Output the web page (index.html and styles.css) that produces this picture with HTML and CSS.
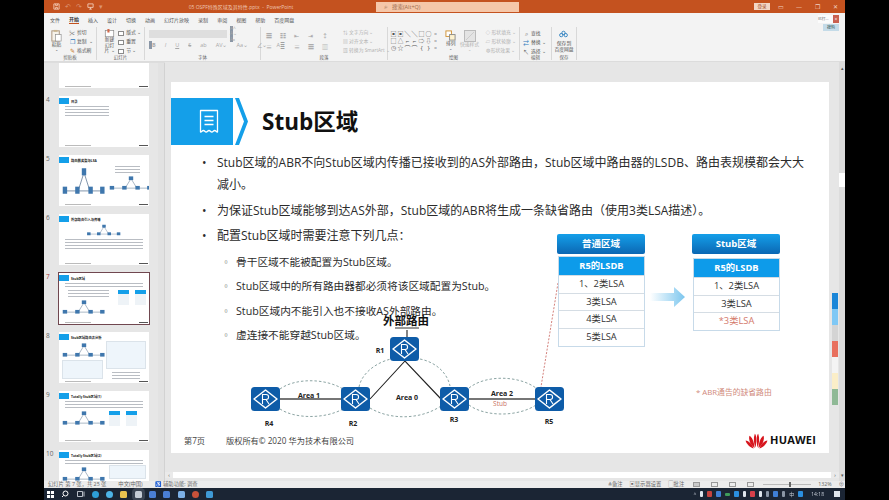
FILE: index.html
```html
<!DOCTYPE html>
<html lang="zh">
<head>
<meta charset="utf-8">
<title>PowerPoint</title>
<link rel="stylesheet" href="styles.css">
</head>
<body>
<svg class="defs" width="0" height="0">
  <symbol id="router" viewBox="0 0 29 24">
    <rect width="29" height="24" rx="3.5" fill="#0e5ca8"/>
    <path d="M14.5 3 26 12 14.5 21 3 12Z" fill="#0e5ca8" stroke="#fff" stroke-width="1.5" stroke-linejoin="round"/>
    <path d="M11.500 17V7.500h3.600a2.500 2.500 0 0 1 0 5h-3.600M15 12.500l3 4.500" fill="none" stroke="#fff" stroke-width="1.100"/>
  </symbol>
  <symbol id="mininet" viewBox="0 0 60 24">
    <path d="M5 19H55M22 19 30 6 38 19" stroke="#5a7390" stroke-width=".7" fill="none"/>
    <rect x="1" y="16" width="6" height="5" fill="#3f77ad"/><rect x="18" y="16" width="6" height="5" fill="#3f77ad"/>
    <rect x="27" y="3" width="6" height="5" fill="#3f77ad"/><rect x="36" y="16" width="6" height="5" fill="#3f77ad"/>
    <rect x="52" y="16" width="6" height="5" fill="#3f77ad"/>
  </symbol>
</svg>
<div class="app">
  <header class="titlebar">
    <div class="qat">
      <svg class="qi" viewBox="0 0 8 8"><path d="M1 1h6v6H1zM3 1v2h2V1M3 7V5h2v2" fill="none" stroke="#f4cdb8"/></svg>
      <span class="qt">↶</span><span class="qt">↷</span>
      <svg class="qi" viewBox="0 0 8 8"><path d="M1 1h6v4H1zM4 5v2M2.500 7h3" fill="none" stroke="#f4cdb8"/></svg>
      <span class="qt">▾</span>
    </div>
    <div class="doc-title">05 OSPF特殊区域及其特性.pptx  -  PowerPoint</div>
    <div class="search"><span class="search-ico">⌕</span>搜索(Alt+Q)</div>
    <div class="win-ctl">
      <span class="login">登录</span>
      <span class="wc">▭</span><span class="wc">—</span><span class="wc">❐</span><span class="wc">✕</span>
    </div>
  </header>

  <nav class="tabs">
    <span>文件</span><span class="on">开始</span><span>插入</span><span>设计</span><span>切换</span><span>动画</span><span>幻灯片放映</span><span>录制</span><span>审阅</span><span>视图</span><span>帮助</span><span>百度网盘</span>
  </nav>

  <section class="ribbon">
    <div class="group g-clip">
      <div class="g-body">
        <div class="big">
          <svg class="big-ico" viewBox="0 0 12 14"><rect x="1" y="2" width="8" height="11" fill="#f6f2ea" stroke="#a9927a"/><rect x="3" y="1" width="4" height="2" fill="#c9b48f"/><rect x="5" y="6" width="6" height="7" fill="#fff" stroke="#8b8b8b" stroke-width=".7"/></svg>
          <span>粘贴</span><i>⌄</i>
        </div>
        <div class="stack">
          <span><b class="mk">✂</b>剪切</span>
          <span><b class="mk blue">❐</b>复制 <i>⌄</i></span>
          <span><b class="mk orange">✎</b>格式刷</span>
        </div>
      </div>
      <div class="g-label">剪贴板</div>
    </div>
    <div class="group g-slide">
      <div class="g-body">
        <div class="big">
          <svg class="big-ico" viewBox="0 0 14 12"><rect x="1" y="2" width="12" height="9" fill="#fff" stroke="#8a8a8a"/><rect x="4" y="0" width="3" height="5" fill="#d2694a"/></svg>
          <span>新建<br>幻灯片 ⌄</span>
        </div>
        <div class="stack">
          <span><b class="mk gbox"></b>版式 ⌄</span>
          <span><b class="mk gbox"></b>重置</span>
          <span><b class="mk gbox"></b>节 ⌄</span>
        </div>
      </div>
      <div class="g-label">幻灯片</div>
    </div>
    <div class="group g-font">
      <div class="g-body col">
        <div class="font-row"><span class="font-box"></span><span class="dim">A^ A⌄ Aₐ</span></div>
        <div class="font-row dim spread"><b>B</b><em>I</em><u>U</u><s>S</s><span>ab</span><span>AV⌄</span><span>Aa⌄</span><span>∠⌄</span><span>A⌄</span></div>
      </div>
      <div class="g-label">字体</div>
    </div>
    <div class="group g-para">
      <div class="g-body">
        <div class="para-grid">
          <span>☰</span><span>☷</span><span>⇤</span><span>⇥</span><span>↕</span>
          <span>≡</span><span>≣</span><span>≡</span><span>☰</span><span>▥</span>
        </div>
        <div class="stack dimtext">
          <span>⇅ 文字方向 ⌄</span>
          <span>▤ 对齐文本 ⌄</span>
          <span>▧ 转换为 SmartArt ⌄</span>
        </div>
      </div>
      <div class="g-label">段落</div>
    </div>
    <div class="group g-draw">
      <div class="g-body">
        <div class="shapes">
          <span>▣</span><span>▣</span><span>╲</span><span>╲</span><span>□</span><span>○</span><span>▫</span>
          <span>□</span><span>△</span><span>⌐</span><span>⌐</span><span>⇨</span><span>⇩</span><span>▫</span>
          <span>◷</span><span>☆</span><span>⌒</span><span>⌒</span><span>{</span><span>}</span><span>▫</span>
        </div>
        <div class="big small-big">
          <svg class="arr-ico" viewBox="0 0 12 12"><rect x="1" y="1" width="6" height="6" fill="#fff" stroke="#d0902e"/><rect x="5" y="5" width="6" height="6" fill="#fdf2d0" stroke="#888"/></svg>
          <span>排列</span><i>⌄</i>
        </div>
        <div class="big small-big dimtext">
          <svg class="arr-ico wide" viewBox="0 0 12 12"><rect x=".5" y=".5" width="11" height="11" fill="#e4e4e4" stroke="#bbb"/><path d="M2 10 10 2" stroke="#ccc"/></svg>
          <span>快速样式</span><i>⌄</i>
        </div>
        <div class="stack dimtext">
          <span>◇ 形状填充 ⌄</span>
          <span>▱ 形状轮廓 ⌄</span>
          <span>◍ 形状效果 ⌄</span>
        </div>
      </div>
      <div class="g-label">绘图</div>
    </div>
    <div class="group g-edit">
      <div class="g-body">
        <div class="stack">
          <span><b class="mk">⌕</b>查找</span>
          <span><b class="mk blue">⇄</b>替换 ⌄</span>
          <span><b class="mk">↖</b>选择 ⌄</span>
        </div>
      </div>
      <div class="g-label">编辑</div>
    </div>
    <div class="group g-save">
      <div class="g-body">
        <div class="big">
          <svg class="cloud" viewBox="0 0 12 9"><circle cx="6" cy="3" r="2.200" fill="none" stroke="#2a7fc0" stroke-width="1.200"/><circle cx="3" cy="6" r="2.200" fill="none" stroke="#2a7fc0" stroke-width="1.200"/><circle cx="9" cy="6" r="2.200" fill="none" stroke="#2a7fc0" stroke-width="1.200"/></svg>
          <span>保存到<br>百度网盘</span>
        </div>
      </div>
      <div class="g-label">保存</div>
    </div>
    <div class="share">
      <div class="share-row"><span class="share-txt">已打...</span><span class="share-x">×</span></div>
      <div class="tip">搜狗</div>
    </div>
  </section>

  <main class="workspace">
    <aside class="thumbs">
      <div class="thumb-list">
        <div class="t-row"><span class="num"></span><div class="thumb"><div class="t-foot"><span></span><b></b></div></div></div>

        <div class="t-row"><span class="num">4</span><div class="thumb">
          <div class="t-head"><i></i><span>目录</span></div>
          <div class="t-lines short"><u></u><u></u><u></u><u></u></div>
          <div class="t-foot"><span></span><b></b></div>
        </div></div>

        <div class="t-row"><span class="num">5</span><div class="thumb">
          <div class="t-head"><i></i><span>路由器类型与LSA</span></div>
          <div class="t-cols">
            <svg class="t-net tall" viewBox="0 0 60 24" preserveAspectRatio="none"><use href="#mininet"/></svg>
            <div class="t-side"><div class="t-lines"><u></u><u></u><u></u></div><svg class="t-net" viewBox="0 0 60 24"><use href="#mininet"/></svg></div>
          </div>
          <div class="t-foot"><span></span><b></b></div>
        </div></div>

        <div class="t-row"><span class="num">6</span><div class="thumb">
          <div class="t-head"><i></i><span>外部路由引入与传播</span></div>
          <svg class="t-net center" viewBox="0 0 60 24"><use href="#mininet"/></svg>
          <div class="t-lines"><u></u><u></u><u></u><u></u></div>
          <div class="t-foot"><span></span><b></b></div>
        </div></div>

        <div class="t-row current"><span class="num">7</span><div class="thumb">
          <div class="t-head"><i></i><span>Stub区域</span></div>
          <div class="t-lines"><u></u><u></u></div>
          <div class="t-cols">
            <div class="t-side"><div class="t-lines"><u></u><u></u><u></u></div><svg class="t-net" viewBox="0 0 60 24"><use href="#mininet"/></svg></div>
            <div class="t-tables"><i></i><i></i></div>
          </div>
          <div class="t-foot"><span></span><b></b></div>
        </div></div>

        <div class="t-row"><span class="num">8</span><div class="thumb">
          <div class="t-head"><i></i><span>Stub区域路由表分析</span></div>
          <div class="t-cols">
            <div class="t-side"><svg class="t-net" viewBox="0 0 60 24"><use href="#mininet"/></svg><div class="t-box"></div></div>
            <div class="t-side"><div class="t-box"></div><div class="t-lines"><u></u><u></u><u></u></div></div>
          </div>
          <div class="t-foot"><span></span><b></b></div>
        </div></div>

        <div class="t-row"><span class="num">9</span><div class="thumb">
          <div class="t-head"><i></i><span>Totally Stub区域(1)</span></div>
          <div class="t-lines"><u></u><u></u><u></u></div>
          <div class="t-cols">
            <svg class="t-net" viewBox="0 0 60 24"><use href="#mininet"/></svg>
            <div class="t-tables"><i></i><i></i></div>
          </div>
          <div class="t-foot"><span></span><b></b></div>
        </div></div>

        <div class="t-row"><span class="num">10</span><div class="thumb">
          <div class="t-head"><i></i><span>Totally Stub区域(2)</span></div>
          <div class="t-lines"><u></u><u></u></div>
          <div class="t-cols">
            <svg class="t-net" viewBox="0 0 60 24"><use href="#mininet"/></svg>
            <div class="t-box"></div>
          </div>
        </div></div>
      </div>
      <div class="t-scroll"><span></span></div>
    </aside>

    <div class="editor">
      <div class="editor-main">
        <div class="stage">
          <article class="slide">
            <div class="s-head">
              <div class="s-badge">
                <svg class="s-doc" viewBox="0 0 20 25"><path d="M1.500 1.500h17v21.500c-1.400 0-1.400-1.500-2.800-1.500s-1.500 1.500-2.900 1.500-1.400-1.500-2.800-1.500-1.400 1.500-2.800 1.500-1.400-1.500-2.800-1.500-1.500 1.500-2.900 1.500ZM5.500 7.500h9M5.500 11.500h9M5.500 15.500h9" fill="none" stroke="#fff" stroke-width="1.300" stroke-linejoin="round"/></svg>
              </div>
              <svg class="s-chev" viewBox="0 0 16 47"><path d="M2 0H6L15 23.500 6 47H2L11 23.500Z" fill="#149fe9"/></svg>
              <h1>Stub区域</h1>
            </div>
            <ul class="bullets">
              <li>Stub区域的ABR不向Stub区域内传播已接收到的AS外部路由，Stub区域中路由器的LSDB、路由表规模都会大大减小。</li>
              <li>为保证Stub区域能够到达AS外部，Stub区域的ABR将生成一条缺省路由（使用3类LSA描述）。</li>
              <li>配置Stub区域时需要注意下列几点：
                <ul class="sub">
                  <li>骨干区域不能被配置为Stub区域。</li>
                  <li>Stub区域中的所有路由器都必须将该区域配置为Stub。</li>
                  <li>Stub区域内不能引入也不接收AS外部路由。</li>
                  <li>虚连接不能穿越Stub区域。</li>
                </ul>
              </li>
            </ul>

            <svg class="s-diagram" viewBox="171 82 658 371">
              <defs>
                <linearGradient id="arrow" x1="0" x2="1"><stop offset="0" stop-color="#fff"/><stop offset="1" stop-color="#7cc6ee"/></linearGradient>
              </defs>
              <path d="M558 283 540 393" fill="none" stroke="#c8615a" stroke-width=".8" stroke-dasharray="2 1.500"/>
              <g fill="none" stroke="#7f9a98" stroke-width=".9" stroke-dasharray="2.500 2">
                <path d="M280 389C295 378 325 378 343 389M280 409C295 419 325 419 343 409"/>
                <path d="M359 387C362 372 378 362 391 359M420 359C435 362 447 372 450 386M370 408C390 420 420 420 441 406"/>
                <path d="M469 388C485 375 518 375 536 388M469 405C485 417 518 417 536 405"/>
              </g>
              <path d="M279 399H341M469 399H536" stroke="#4a4a4a" stroke-width="1.300"/>
              <path d="M370 399 405 361 441 399M407 330V338" stroke="#222" stroke-width="1.100" fill="none"/>
              <path d="M395 328H419" stroke="#333" stroke-width="1"/>
              <use href="#router" x="390" y="337" width="29" height="24"/>
              <use href="#router" x="251" y="387" width="29" height="24"/>
              <use href="#router" x="341" y="387" width="29" height="24"/>
              <use href="#router" x="440" y="387" width="29" height="24"/>
              <use href="#router" x="535" y="387" width="29" height="24"/>
              <text class="d-ext" x="406" y="325">外部路由</text>
              <g class="d-lbl">
                <text x="380" y="353">R1</text><text x="269" y="426">R4</text><text x="353" y="426">R2</text><text x="454" y="422">R3</text><text x="549" y="424">R5</text>
                <text x="309" y="398">Area 1</text><text x="407" y="400">Area 0</text><text x="502" y="396">Area 2</text>
              </g>
              <text class="d-stub" x="500" y="406">Stub</text>
              <path d="M650 293H674V287L685 297 674 307V301H650Z" fill="url(#arrow)"/>
            </svg>

            <div class="lsdb lsdb-a">
              <div class="l-title">普通区域</div>
              <div class="l-table">
                <div class="l-head">R5的LSDB</div>
                <div class="l-row">1、2类LSA</div><div class="l-row">3类LSA</div><div class="l-row">4类LSA</div><div class="l-row">5类LSA</div>
              </div>
            </div>
            <div class="lsdb lsdb-b">
              <div class="l-title">Stub区域</div>
              <div class="l-table">
                <div class="l-head">R5的LSDB</div>
                <div class="l-row">1、2类LSA</div><div class="l-row">3类LSA</div><div class="l-row red">*3类LSA</div>
              </div>
            </div>
            <div class="s-note">* ABR通告的缺省路由</div>

            <footer class="s-foot">
              <span class="s-page">第7页</span>
              <span class="s-copy">版权所有© 2020 华为技术有限公司</span>
              <span class="s-logo">
                <svg class="petals" viewBox="-12 -11 24 19">
                  <g fill="#d7151d">
                    <path d="M-1 6.500C-3 2-3.500-3-1.800-8-.2-7 .5-2-1 6.500Z"/>
                    <path d="M1 6.500C3 2 3.500-3 1.800-8 .2-7-.5-2 1 6.500Z"/>
                    <path d="M-2 7C-7 3-8.500-2-7.500-6-5-5-2.500 0-2 7Z"/>
                    <path d="M2 7C7 3 8.500-2 7.500-6 5-5 2.500 0 2 7Z"/>
                    <path d="M-3 7.500C-7 6-10.500 3-11.500-1-8-.5-4.500 3-3 7.500Z"/>
                    <path d="M3 7.500C7 6 10.500 3 11.500-1 8-.5 4.500 3 3 7.500Z"/>
                  </g>
                </svg>
                <b>HUAWEI</b>
              </span>
            </footer>
          </article>
          <div class="strip"><i class="c1"></i><i class="c2"></i><i class="c3"></i><i class="c4"></i><i class="c5"></i><i class="c6"></i><i class="c7"></i></div>
        </div>
        <div class="hscroll"><span class="h-btn">‹</span><span class="h-thumb"></span><span class="h-btn end">›</span></div>
      </div>
      <div class="vscroll"><span class="v-btn">▴</span><span class="v-thumb"></span><span class="v-btn low">▾</span></div>
    </div>
  </main>

  <footer class="status">
    <div class="st-left"><span>幻灯片 第 7 张，共 25 张</span><span>中文(中国)</span><span>♿ 辅助功能: 调查</span></div>
    <div class="st-right"><span>≜备注</span><span>▣显示器设置</span><span>▢批注</span><span class="vb on"></span><span class="vb"></span><span class="vb"></span><span class="vb"></span><span class="zoom"><i></i></span><span>132%</span><span>⊕</span></div>
  </footer>

  <div class="taskbar">
    <div class="tb-left">
      <svg class="winlogo" viewBox="0 0 8 8"><path d="M0 0h3.500v3.500H0zM4.500 0H8v3.500H4.500zM0 4.500h3.500V8H0zM4.500 4.500H8V8H4.500z" fill="#fff"/></svg>
      <svg class="tb-ico" viewBox="0 0 8 8"><circle cx="4.500" cy="3.500" r="2.500" fill="none" stroke="#fff"/><path d="M2.500 5.500 1 7" stroke="#fff"/></svg>
      <svg class="tb-ico" viewBox="0 0 8 8"><path d="M.5 1.500h5v5h-5zM7 1.500v5" fill="none" stroke="#dfe5ec" stroke-width=".8"/></svg>
      <i class="ti edge"></i><i class="ti qq"></i><i class="ti fold"></i><i class="ti act"></i><i class="ti word"></i><i class="ti word"></i><i class="ti pic"></i><i class="ti ppt"></i><i class="ti dl"></i>
    </div>
    <div class="tb-right">
      <span class="chev">^</span><i class="tr wt"></i><i class="tr rd"></i><i class="tr bl"></i><i class="tr gr"></i><i class="tr bl2"></i><i class="tr wt2"></i><i class="tr rd2"></i><i class="tr wt"></i><i class="tr dim"></i><i class="tr bl"></i><i class="tr dim"></i><span class="ime">中</span><i class="tr bl2"></i>
      <span class="clock">14:18</span><i class="notice"></i>
    </div>
  </div>
</div>
</body>
</html>
```
FILE: styles.css
```css
* { box-sizing: border-box; }
html, body { margin: 0; height: 100%; background: #000; overflow: hidden; }
body { font-family: "Open Sans", "Noto Sans CJK SC", sans-serif; }
.defs { position: absolute; }
i { font-style: normal; }

.app {
  width: 801px; height: 500px; margin-left: 44px;
  display: flex; flex-direction: column;
  background: #f3f3f3; color: #444;
  filter: blur(.45px);
}

/* title bar */
.titlebar { height: 13px; background: #c4521f; display: flex; align-items: center; position: relative; color: #f3d6c6; font-size: 5.5px; flex: none; }
.qat { display: flex; align-items: center; gap: 5px; padding-left: 9px; width: 97px; flex: none; }
.qi { width: 7px; height: 7px; }
.qt { font-size: 7px; line-height: 7px; color: #dd9472; }
.doc-title { width: 200px; flex: none; text-align: center; white-space: pre; font-size: 5px; color: #efc7b2; }
.search { margin-left: 35px; width: 143px; height: 10px; flex: none; background: #f5c7a9; color: #9a6a4b; padding-left: 8px; display: flex; align-items: center; gap: 4px; }
.search-ico { font-size: 7px; line-height: 7px; }
.win-ctl { margin-left: auto; display: flex; align-items: center; padding-right: 1px; color: #f2d3c2; font-size: 6px; }
.login { background: #f2d6c6; color: #a24a20; width: 16px; height: 7px; line-height: 7px; text-align: center; font-size: 4.500px; margin-right: 2px; }
.wc { width: 18px; text-align: center; }

/* tabs */
.tabs { height: 13px; flex: none; display: flex; align-items: center; padding-left: 6px; gap: 9px; font-size: 5px; color: #555; background: #f3f3f3; }
.tabs span { white-space: nowrap; }
.tabs .on { color: #333; font-weight: 700; border-bottom: 1px solid #c4521f; line-height: 7px; }

/* ribbon */
.ribbon { height: 36px; flex: none; display: flex; background: #f3f3f3; position: relative; border-bottom: 1px solid #dcdcdc; font-size: 4.800px; color: #555; line-height: 1.15; }
.group { display: flex; flex-direction: column; border-right: 1px solid #d8d8d8; margin: 1px 0 1px; flex: none; }
.g-body { flex: 1; display: flex; gap: 3px; padding: 1px 3px 0; min-height: 0; }
.g-body.col { flex-direction: column; gap: 3px; padding: 3px 4px 0; }
.g-label { height: 6px; line-height: 6px; text-align: center; font-size: 4.500px; color: #666; }
.g-clip { width: 53px; } .g-slide { width: 48px; } .g-font { width: 116px; } .g-para { width: 127px; }
.g-draw { width: 132px; } .g-edit { width: 32px; } .g-save { width: 25px; }
.big { display: flex; flex-direction: column; align-items: center; text-align: center; justify-content: flex-start; }
.big i { line-height: 3px; font-size: 4px; }
.big-ico { width: 13px; height: 13px; margin-top: 1px; }
.stack { display: flex; flex-direction: column; gap: 3px; padding-top: 2px; white-space: nowrap; }
.stack span { display: flex; align-items: center; gap: 2px; height: 6px; }
.mk { display: inline-block; width: 6px; text-align: center; font-size: 6px; font-weight: 400; color: #666; }
.mk.blue { color: #2d78bc; } .mk.orange { color: #c97a2a; }
.mk.gbox { height: 5px; border: 1px solid #8a8a8a; background: #fff; }
.g-clip .g-body { padding-left: 6px; gap: 6px; }
.g-slide .g-body { padding-left: 6px; gap: 2px; }
.font-row { display: flex; align-items: center; gap: 3px; height: 8px; }
.font-box { width: 78px; height: 8px; background: #dedede; }
.dim { color: #a8a8a8; }
.spread { justify-content: flex-start; gap: 9px; font-size: 5.500px; padding-left: 3px; }
.para-grid { display: grid; grid-template-columns: repeat(5, 14px); grid-auto-rows: 11px; align-items: center; padding: 3px 0 0 2px; color: #a0a0a0; font-size: 6px; }
.dimtext { color: #b0b0b0; }
.g-para .stack { margin-left: 4px; }
.shapes { display: grid; grid-template-columns: repeat(7, 7px); grid-auto-rows: 7px; font-size: 6px; line-height: 7px; color: #555; text-align: center; padding-top: 3px; }
.small-big { width: 14px; white-space: nowrap; }
.arr-ico { width: 11px; height: 11px; margin-top: 2px; }
.arr-ico.wide { width: 12px; height: 12px; }
.g-draw .g-body { gap: 5px; padding-left: 2px; }
.g-draw .stack { margin-left: 4px; }
.g-edit .stack { padding-top: 3px; }
.g-save .g-body { padding: 2px 0 0; justify-content: center; }
.cloud { width: 9px; height: 8px; margin: 1px 0 3px; }
.share { position: absolute; right: 6px; top: 2px; width: 21px; display: flex; flex-direction: column; align-items: flex-end; gap: 1px; margin-top: -13px; }
.share-row { display: flex; height: 8px; align-items: center; background: #fbfbfb; width: 21px; justify-content: space-between; font-size: 3.800px; }
.share-x { width: 6px; height: 8px; background: #c9604f; color: #fff; text-align: center; line-height: 8px; font-size: 5px; }
.tip { width: 16px; height: 7px; background: #c4dbe8; text-align: center; font-size: 4px; line-height: 7px; color: #355; }

/* workspace */
.workspace { flex: 1; min-height: 0; display: flex; background: #e6e6e6; }
.thumbs { width: 121px; flex: none; display: flex; overflow: hidden; border-top: 1px solid #ddd; }
.thumb-list { width: 114px; flex: none; display: flex; flex-direction: column; gap: 8px; margin-top: -26px; }
.t-row { display: flex; align-items: flex-start; height: 51px; flex: none; }
.num { width: 15px; flex: none; padding-left: 2px; text-align: left; font-size: 6.500px; line-height: 8px; color: #666; }
.thumb { width: 90px; height: 51px; background: #fff; display: flex; flex-direction: column; padding-top: 2px; overflow: hidden; }
.current .thumb { outline: 1.500px solid #70474f; outline-offset: 0; }
.current .num { color: #a23a3a; }
.t-head { display: flex; align-items: center; gap: 2px; height: 6px; flex: none; font-size: 3.300px; font-weight: 700; color: #222; white-space: nowrap; }
.t-head i { width: 10px; height: 6px; background: #149fe9; margin-left: 0; }
.t-lines { display: flex; flex-direction: column; gap: 2px; padding: 2px 6px 0; }
.t-lines u { display: block; height: 1px; background: #b9bdc3; text-decoration: none; }
.t-lines.short { padding-right: 40px; }
.t-cols { flex: 1; display: flex; gap: 3px; padding: 1px 3px; min-height: 0; }
.t-side { flex: 1; display: flex; flex-direction: column; gap: 1px; min-width: 0; }
.t-net { width: 44px; height: 18px; display: block; flex: none; }
.t-net.tall { height: 34px; }
.t-net.center { margin: 1px auto 0; height: 14px; }
.t-tables { display: flex; gap: 6px; flex: none; padding-top: 2px; }
.t-tables i { width: 11px; height: 15px; background: linear-gradient(#149fe9 30%, #eef3f7 30%); }
.t-box { height: 14px; flex: 1; background: #eef5fb; border: 1px solid #dbe3ea; }
.t-foot { margin-top: auto; height: 3px; flex: none; display: flex; justify-content: space-between; align-items: center; padding: 0 1px 0 6px; }
.t-foot span { width: 26px; height: 1px; background: #bbb; }
.t-foot b { width: 9px; height: 1px; background: #555; }
.t-scroll { width: 7px; flex: none; background: #e2e2e2; border-right: 1px solid #d2d2d2; }
.editor { flex: 1; min-width: 0; display: flex; }
.editor-main { flex: 1; min-width: 0; display: flex; flex-direction: column; }
.stage { flex: 1; min-height: 0; display: flex; padding: 20px 0 0 6px; background: #e6e6e6; }

/* slide */
.slide { width: 658px; height: 371px; flex: none; background: #fff; position: relative; display: flex; flex-direction: column; color: #222; }
.s-head { display: flex; align-items: center; height: 47px; margin-top: 16px; flex: none; }
.s-badge { width: 62px; height: 47px; background: #149fe9; display: flex; align-items: center; justify-content: flex-end; padding-right: 14px; flex: none; }
.s-doc { width: 20px; height: 25px; }
.s-chev { width: 16px; height: 47px; flex: none; }
.s-head h1 { margin: 0 0 3px 13px; font-size: 22.500px; font-weight: 700; color: #111; letter-spacing: 0; }
.bullets { list-style: none; margin: 7px 0 0; padding: 0 19px 0 46px; font-size: 12px; line-height: 22px; color: #2b2b2b; }
.bullets > li { position: relative; margin-bottom: 3.500px; }
.bullets > li::before { content: "•"; position: absolute; left: -15px; }
.sub { list-style: none; margin: 7px 0 0; padding-left: 19px; font-size: 10.700px; width: 340px; line-height: 16px; }
.sub li { position: relative; margin-bottom: 8.300px; white-space: nowrap; }
.sub li::before { content: "▫"; position: absolute; left: -14px; font-size: 8px; }
.s-diagram { position: absolute; inset: 0; width: 658px; height: 371px; }
.d-ext { font: 700 11.500px "Noto Sans CJK SC", sans-serif; text-anchor: middle; fill: #111; }
.d-lbl { font: 700 7px "Open Sans", sans-serif; text-anchor: middle; fill: #222; }
.d-stub { font: 400 6.500px "Open Sans", sans-serif; text-anchor: middle; fill: #c9705f; }
.lsdb { position: absolute; top: 152px; width: 88px; display: flex; flex-direction: column; text-align: center; }
.lsdb-a { left: 386px; } .lsdb-b { left: 521px; }
.l-title { height: 20px; line-height: 20px; border-radius: 2px; background: linear-gradient(#149fe9, #0b67b3); color: #fff; font-size: 9.500px; font-weight: 700; margin-bottom: 2px; }
.lsdb-b .l-title { margin-bottom: 4px; }
.l-table { border: 1px solid #c7dae9; margin-left: 1px; }
.l-head { height: 18px; line-height: 18px; background: #0d9bea; color: #fff; font-size: 9.300px; font-weight: 700; }
.l-row { height: 17.700px; line-height: 16.500px; border-top: 1px solid #d5dde4; font-size: 9.300px; color: #333; }
.l-row.red { color: #d47a6c; }
.s-note { position: absolute; left: 525px; top: 304px; font-size: 7.800px; line-height: 12px; color: #d08a7c; white-space: nowrap; }
.s-foot { margin-top: auto; display: flex; align-items: center; height: 22px; padding: 0 13px 5px 13px; flex: none; color: #444; font-size: 8.200px; }
.s-page { width: 42px; }
.s-logo { margin-left: auto; display: flex; align-items: center; gap: 2px; }
.petals { width: 23px; height: 18px; }
.s-logo b { font-size: 11px; color: #111; letter-spacing: .2px; }

/* side strip and scrollbars */
.strip { width: 6px; margin-left: 3px; padding-top: 211px; display: flex; flex-direction: column; flex: none; }
.strip i { display: block; height: 16px; flex: none; }
.c1 { background: #1a86d8; } .c2 { background: #7fc8f5; } .c3 { background: #d4d4d4; } .c4 { background: #e8705e; }
.c5 { background: #f4f4f4; } .c6 { background: #fbeec8; } .c7 { background: #8fb996; }
.hscroll { height: 6px; flex: none; margin-bottom: 3px; background: #fff; display: flex; align-items: center; }
.h-btn { width: 8px; height: 6px; background: #eaeaea; font-size: 5px; line-height: 6px; text-align: center; }
.h-thumb { flex: 1; }
.h-btn.end { width: 8px; }
.vscroll { width: 6px; flex: none; background: #dcdcdc; display: flex; flex-direction: column; align-items: stretch; padding-top: 3px; }
.v-btn { height: 6px; font-size: 5px; line-height: 6px; text-align: center; color: #555; }
.v-thumb { height: 14px; background: #fff; margin-top: 102px; }
.v-btn.low { margin-top: auto; margin-bottom: 3px; }

/* status bar */
.status { height: 7px; flex: none; display: flex; justify-content: space-between; background: #ececec; font-size: 5.300px; line-height: 7px; color: #666; white-space: nowrap; padding: 0 1px 0 4px; }
.st-left, .st-right { display: flex; align-items: center; }
.st-left { gap: 12px; }
.st-right { gap: 7px; }
.vb { width: 7px; height: 5px; border: 1px solid #999; margin: 0 2px; }
.vb.on { background: #c9c9c9; }
.zoom { width: 48px; height: 1px; background: #bbb; position: relative; }
.zoom i { position: absolute; left: 26px; top: -2px; width: 1.500px; height: 5px; background: #666; }

/* taskbar */
.taskbar { height: 12px; flex: none; background: #1b2534; display: flex; justify-content: space-between; align-items: center; padding: 0 2px 0 3px; }
.tb-left { display: flex; align-items: center; gap: 7.300px; }
.winlogo { width: 7px; height: 7px; }
.tb-ico { width: 8px; height: 8px; }
.ti { display: block; width: 7px; height: 7px; border-radius: 1.500px; }
.edge { background: #2e9fd8; border-radius: 50%; }
.qq { background: #4db4e6; border-radius: 50%; }
.fold { background: #e9c24f; }
.act { background: #c5ccd6; box-shadow: 0 0 0 3px #3a4453; }
.word { background: #4a7fd6; }
.pic { background: #7cb0e6; }
.ppt { background: #c8523a; border-radius: 50%; }
.dl { background: #3f9ad6; }
.tb-right { display: flex; align-items: center; gap: 4px; color: #c7ced8; font-size: 5px; }
.tr { display: block; width: 5px; height: 6px; border-radius: 1px; }
.wt { background: #dfe5ec; width: 3px; } .rd { background: #c7433e; } .bl { background: #3f7fd6; } .gr { background: #3f9c5a; height: 3px; }
.bl2 { background: #2b8fe0; } .wt2 { background: #dfe5ec; width: 3px; } .rd2 { background: #d8404a; } .dim { background: #8a96a6; width: 3px; }
.chev, .ime { line-height: 6px; }
.clock { margin-left: 4px; font-size: 5px; }
.notice { display: block; width: 6px; height: 6px; background: #dfe5ec; margin: 0 3px 0 6px; }
```
